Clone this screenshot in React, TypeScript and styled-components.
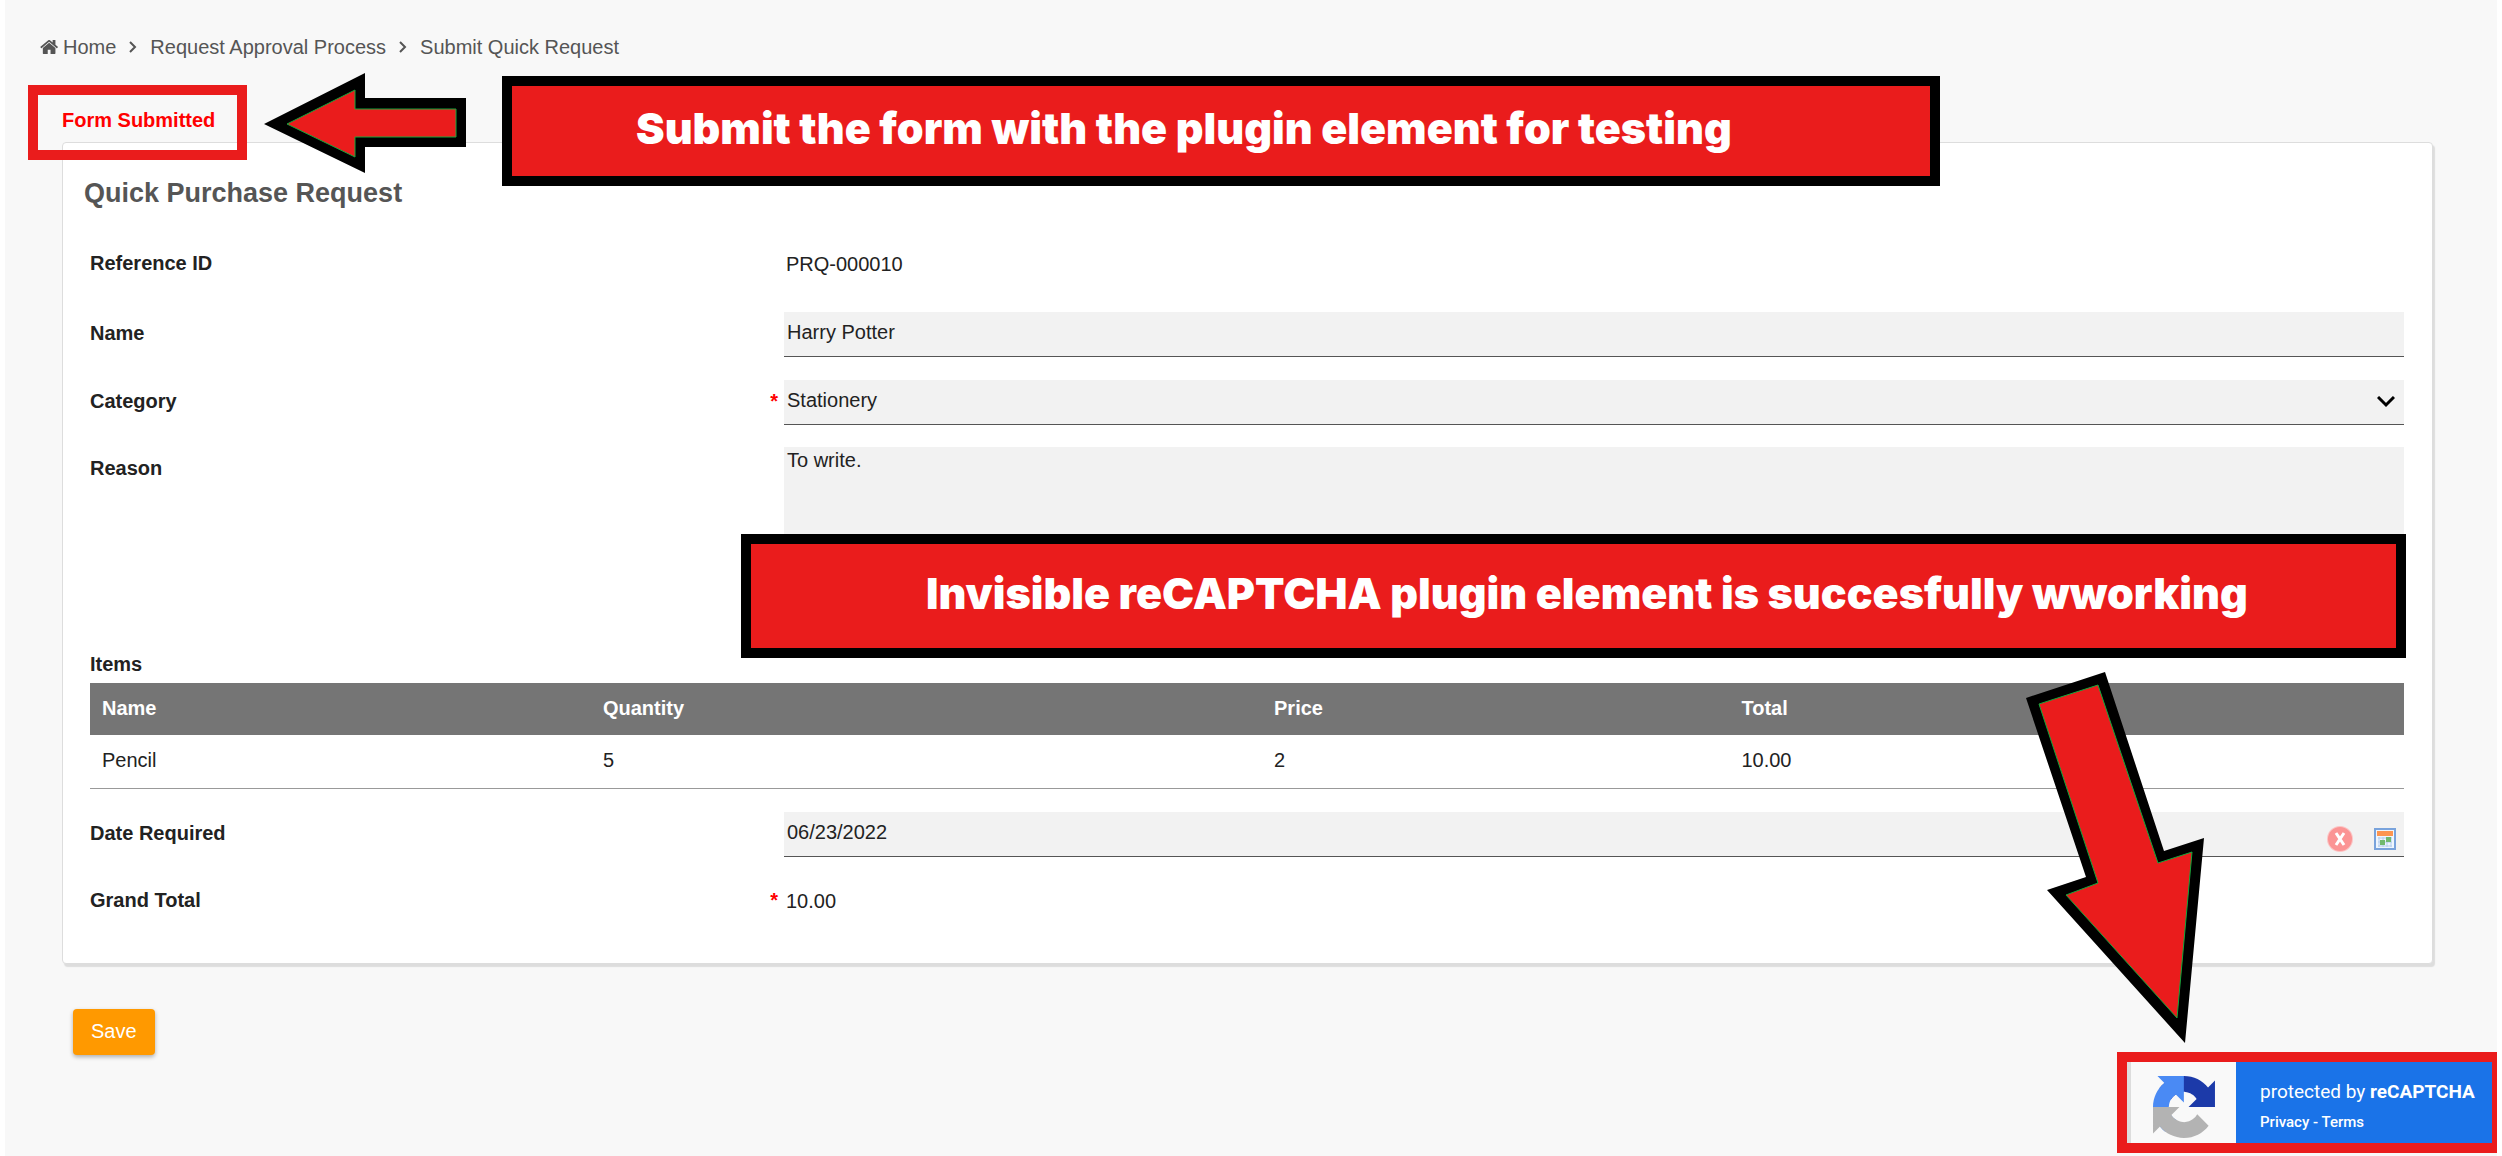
import React from "react";
import styled, { createGlobalStyle } from "styled-components";

const GlobalStyle = createGlobalStyle`
  *, *::before, *::after { box-sizing: border-box; }
  html, body { margin: 0; padding: 0; min-height: 100%; }
  body {
    background: #f8f8f8;
    color: #222;
    font: 20px/24px "Liberation Sans", Arial, sans-serif;
  }
  input, select, textarea, button { font: inherit; color: inherit; }
`;

const Page = styled.div`
  position: relative;
  min-height: 100vh;
  padding: 35px 64px 32px 57px;
  border: solid #fff;
  border-width: 0 5px;
  overflow: hidden;
`;

const Breadcrumbs = styled.nav`
  display: flex;
  align-items: center;
  gap: 13px;
  height: 24px;
  margin-left: -22px;
  color: #555;
`;

const Crumb = styled.a`
  display: flex;
  align-items: center;
  gap: 5px;
  color: inherit;
  text-decoration: none;
`;

const HomeIcon = styled.svg`
  width: 18px;
  height: 14px;
  fill: #555;
`;

const CrumbArrow = styled.svg`
  width: 8px;
  height: 12px;
  fill: none;
  stroke: #555;
  stroke-width: 2;
`;

const Notice = styled.div`
  display: flex;
  width: max-content;
  margin: 26px 0 -18px -34px;
  padding: 13px 22px 18px 24px;
  border: 10px solid #ea1c1c;
  position: relative;
  color: #ff0000;
  font-weight: bold;
`;

const Card = styled.main`
  padding: 36px 28px 16px 27px;
  background: #fff;
  border: 1px solid #ddd;
  border-radius: 4px;
  box-shadow: 2px 3px 1px #ddd;
`;

const Title = styled.h1`
  margin: 0 0 35px -6px;
  color: #555;
  font-size: 27px;
  line-height: 28px;
`;

const Row = styled.div<{ $height?: number; $gap?: number }>`
  display: grid;
  grid-template-columns: 694px 1fr;
  align-items: start;
  min-height: ${(p) => p.$height ?? 45}px;
  margin-bottom: ${(p) => p.$gap ?? 23}px;
`;

const LabelCell = styled.div`
  display: flex;
  justify-content: space-between;
  padding: 9px 6px 0 0;
`;

const Label = styled.label`
  font-weight: bold;
`;

const Required = styled.span`
  color: #ff0000;
  font-weight: bold;
`;

const Value = styled.output`
  padding: 10px 2px 0;
`;

const FieldBox = styled.div`
  display: flex;
  align-items: center;
  height: 45px;
  background: #f2f2f2;
  border-bottom: 1px solid #555;
`;

const TextInput = styled.input`
  flex: 1;
  min-width: 0;
  height: 44px;
  padding: 0 3px 3px;
  border: 0;
  outline: 0;
  background: transparent;
`;

const SelectWrap = styled(FieldBox)`
  display: grid;
  grid-template-columns: 1fr 36px;
`;

const Select = styled.select`
  grid-column: 1 / 3;
  grid-row: 1;
  height: 44px;
  padding: 0 3px 4px;
  border: 0;
  outline: 0;
  appearance: none;
  background: transparent;
`;

const Chevron = styled.svg`
  grid-column: 2;
  grid-row: 1;
  width: 18px;
  height: 12px;
  margin-left: 9px;
  pointer-events: none;
  fill: none;
  stroke: #000;
  stroke-width: 3;
`;

const TextArea = styled.textarea`
  width: 100%;
  height: 180px;
  padding: 1px 3px;
  border: 0;
  border-bottom: 1px solid #555;
  outline: 0;
  resize: none;
  background: #f2f2f2;
`;

const IconButton = styled.button`
  display: flex;
  padding: 0;
  margin: 10px 8px 0 13px;
  border: 0;
  background: none;
`;

const ItemsTable = styled.table`
  width: 100%;
  margin-bottom: 23px;
  border-collapse: collapse;
  table-layout: fixed;
  text-align: left;

  caption {
    padding-bottom: 7px;
    font-weight: bold;
    text-align: left;
  }
  th, td {
    height: 52px;
    padding: 0 12px 2px;
  }
  th {
    background: #757575;
    color: #fff;
  }
  td { border-bottom: 1px solid #999; height: 53px; }
  th:nth-child(1) { width: 21.65%; }
  th:nth-child(2) { width: 29%; }
  th:nth-child(3) { width: 20.2%; }
`;

const SaveButton = styled.button`
  display: block;
  height: 46px;
  margin: 45px 0 0 11px;
  padding: 0 18px 2px;
  border: 0;
  border-radius: 4px;
  background: #ff9900;
  color: #fff;
  box-shadow: 0 2px 4px rgba(0, 0, 0, 0.3);
`;

const Callout = styled.div<{ $x: number; $y: number; $w: number; $h: number; $pad: number }>`
  position: absolute;
  left: ${(p) => p.$x}px;
  top: ${(p) => p.$y}px;
  width: ${(p) => p.$w}px;
  height: ${(p) => p.$h}px;
  padding: 0 0 7px ${(p) => p.$pad}px;
  border: 10px solid #000;
  background: #ea1c1c;
  color: #fff;
  display: flex;
  align-items: center;
  white-space: nowrap;
  font: 900 43px/48px Inter, "Arial Black", sans-serif;
`;

const ArrowLayer = styled.svg`
  position: absolute;
  left: -5px;
  top: 0;
  width: 2502px;
  height: 1156px;
  pointer-events: none;

  .edge { fill: #000; }
  .core { fill: #ea1c1c; stroke: #12a83c; stroke-width: 1; }
`;

const Badge = styled.aside`
  position: absolute;
  right: 0;
  bottom: 3px;
  display: flex;
  width: 380px;
  height: 101px;
  border: 10px solid #ea1c1c;
  border-right-width: 5px;
  background: #1a73e8;
`;

const BadgeLogo = styled.div`
  width: 109px;
  padding: 14px 0 0 22px;
  background: #f9f9f9;
  border-left: 4px solid #ddd;
`;

const BadgeText = styled.div`
  padding: 18px 0 0 24px;
  color: #fff;
  font-family: Roboto, sans-serif;
  font-size: 19px;
  white-space: nowrap;
`;

const BadgeLinks = styled.div`
  margin-top: 6px;
  font-size: 15px;
  font-weight: 500;
  a { color: inherit; text-decoration: none; }
`;

const Sep = () => (
  <CrumbArrow viewBox="0 0 8 12"><path d="M1 1l5 5-5 5" /></CrumbArrow>
);

export default function App() {
  return (
    <>
      <GlobalStyle />
      <Page>
        <Breadcrumbs aria-label="Breadcrumb">
          <Crumb href="#home">
            <HomeIcon viewBox="0 256 1640 1280" aria-hidden="true">
              <path d="M1408 992v480q0 26-19 45t-45 19h-384v-384h-256v384h-384q-26 0-45-19t-19-45v-480q0-1 .5-3t.5-3l575-474 575 474q1 2 1 6zm223-69l-62 74q-8 9-21 11h-3q-13 0-21-7l-692-577-692 577q-12 8-24 7-13-2-21-11l-62-74q-8-10-7-23.5t11-21.5l719-599q32-26 76-26t76 26l244 204v-195q0-14 9-23t23-9h192q14 0 23 9t9 23v408l219 182q10 8 11 21.5t-7 23.5z" />
            </HomeIcon>
            Home
          </Crumb>
          <Sep />
          <Crumb href="#process">Request Approval Process</Crumb>
          <Sep />
          <Crumb href="#request">Submit Quick Request</Crumb>
        </Breadcrumbs>
        <Notice role="status">Form Submitted</Notice>
        <Card>
          <Title>Quick Purchase Request</Title>
          <Row $gap={25}>
            <LabelCell><Label htmlFor="ref">Reference ID</Label></LabelCell>
            <Value id="ref">PRQ-000010</Value>
          </Row>
          <Row>
            <LabelCell><Label htmlFor="name">Name</Label></LabelCell>
            <FieldBox><TextInput id="name" defaultValue="Harry Potter" /></FieldBox>
          </Row>
          <Row $gap={22}>
            <LabelCell><Label htmlFor="category">Category</Label><Required>*</Required></LabelCell>
            <SelectWrap>
              <Select id="category" defaultValue="Stationery"><option>Stationery</option></Select>
              <Chevron viewBox="0 0 18 12"><path d="M1 1l8 8 8-8" /></Chevron>
            </SelectWrap>
          </Row>
          <Row $height={182}>
            <LabelCell><Label htmlFor="reason">Reason</Label></LabelCell>
            <TextArea id="reason" defaultValue="To write." />
          </Row>
          <ItemsTable>
            <caption>Items</caption>
            <thead>
              <tr><th>Name</th><th>Quantity</th><th>Price</th><th>Total</th></tr>
            </thead>
            <tbody>
              <tr><td>Pencil</td><td>5</td><td>2</td><td>10.00</td></tr>
            </tbody>
          </ItemsTable>
          <Row $gap={22}>
            <LabelCell><Label htmlFor="date">Date Required</Label></LabelCell>
            <FieldBox>
              <TextInput id="date" defaultValue="06/23/2022" />
              <IconButton type="button" aria-label="Clear date">
                <svg width="26" height="26" viewBox="0 0 26 26">
                  <circle cx="13" cy="13" r="13" fill="#fcc4c4" />
                  <circle cx="13" cy="13" r="12" fill="#fb9494" />
                  <path d="M9 7l8 12M17 7l-8 12" stroke="#fff" strokeWidth="3" />
                </svg>
              </IconButton>
              <IconButton type="button" aria-label="Pick date">
                <svg width="22" height="22" viewBox="0 0 22 22">
                  <rect x="1" y="1" width="20" height="20" fill="#eef5fd" stroke="#79a3dc" strokeWidth="2" />
                  <path d="M4 10h14M4 14h14M4 18h14M5 9v10M9 9v10M13 9v10M17 9v10" stroke="#b4cdec" />
                  <rect x="3" y="3" width="16" height="5" fill="#fd9550" />
                  <path d="M6 12h5v5H6zM12 9h5v5h-5z" fill="#71b96f" />
                </svg>
              </IconButton>
            </FieldBox>
          </Row>
          <Row>
            <LabelCell><Label htmlFor="total">Grand Total</Label><Required>*</Required></LabelCell>
            <Value id="total">10.00</Value>
          </Row>
        </Card>
        <SaveButton type="button">Save</SaveButton>

        <Callout $x={497} $y={76} $w={1438} $h={110} $pad={124}>
          Submit the form with the plugin element for testing
        </Callout>
        <Callout $x={736} $y={534} $w={1665} $h={124} $pad={175}>
          Invisible reCAPTCHA plugin element is succesfully wworking
        </Callout>
        <ArrowLayer viewBox="0 0 2502 1156" aria-hidden="true">
          <polygon className="edge" points="264,124 365,73 365,98 466,98 466,147 365,147 365,173" />
          <polygon className="core" points="287,124 355,90 355,109 456,109 456,137 355,137 355,157" />
          <polygon className="edge" points="2026,698 2105,672 2164,851 2204,838 2185,1043 2047,890 2086,877" />
          <polygon className="core" points="2039,704 2098,685 2158,863 2192,852 2177,1018 2066,895 2098,883" />
        </ArrowLayer>
        <Badge>
          <BadgeLogo>
            <svg width="62" height="62" viewBox="0 0 64 64">
              <path d="M64 31.955l-.033-1.37V4.687l-7.16 7.16C50.948 4.674 42.033.093 32.05.093c-10.4 0-19.622 4.96-25.458 12.64l11.736 11.86a15.55 15.55 0 0 1 4.754-5.334c2.05-1.6 4.952-2.906 8.968-2.906.485 0 .86.057 1.135.163 4.976.393 9.288 3.14 11.828 7.124l-8.307 8.307L64 31.953" fill="#1c3aa9" />
              <path d="M31.862.094l-1.37.033H4.594l7.16 7.16C4.58 13.147 0 22.06 0 32.046c0 10.4 4.96 19.622 12.64 25.458L24.5 45.768a15.55 15.55 0 0 1-5.334-4.754c-1.6-2.05-2.906-4.952-2.906-8.968 0-.485.057-.86.163-1.135.393-4.976 3.14-9.288 7.124-11.828l8.307 8.307L31.86.095" fill="#4a8af4" />
              <path d="M.001 32.045l.033 1.37v25.898l7.16-7.16c5.86 7.173 14.774 11.754 24.76 11.754 10.4 0 19.622-4.96 25.458-12.64l-11.736-11.86a15.55 15.55 0 0 1-4.754 5.334c-2.05 1.6-4.952 2.906-8.968 2.906-.485 0-.86-.057-1.135-.163-4.976-.393-9.288-3.14-11.828-7.124l8.307-8.307c-10.522.04-22.4.066-27.295-.005" fill="#b3b3b3" />
            </svg>
          </BadgeLogo>
          <BadgeText>
            protected by <strong>reCAPTCHA</strong>
            <BadgeLinks><a href="#privacy">Privacy</a> - <a href="#terms">Terms</a></BadgeLinks>
          </BadgeText>
        </Badge>
      </Page>
    </>
  );
}
